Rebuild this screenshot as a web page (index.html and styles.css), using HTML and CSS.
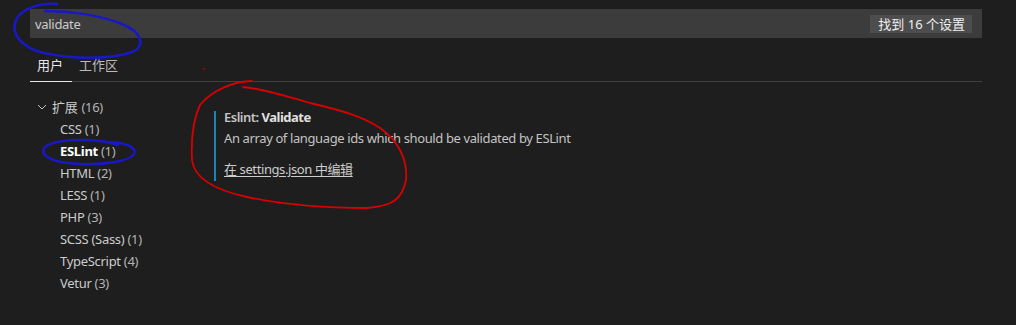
FILE: index.html
```html
<!DOCTYPE html>
<html lang="zh">
<head>
<meta charset="utf-8">
<link rel="stylesheet" href="styles.css">
</head>
<body>
<div class="page">
  <div class="search">
    <span class="query">validate</span>
    <span class="badge">找到 16 个设置</span>
  </div>
  <div class="tabs">
    <span class="tab active">用户</span>
    <span class="tab">工作区</span>
  </div>
  <div class="main">
    <ul class="toc">
      <li class="group"><svg class="chev" width="10" height="10" viewBox="0 0 10 10"><path d="M1 3 L5 7 L9 3" fill="none" stroke="#c5c5c5" stroke-width="1"/></svg>扩展 <span class="count">(16)</span></li>
      <li class="item">CSS <span class="count">(1)</span></li>
      <li class="item sel"><b>ESLint</b> <span class="count">(1)</span></li>
      <li class="item">HTML <span class="count">(2)</span></li>
      <li class="item">LESS <span class="count">(1)</span></li>
      <li class="item">PHP <span class="count">(3)</span></li>
      <li class="item">SCSS (Sass) <span class="count">(1)</span></li>
      <li class="item">TypeScript <span class="count">(4)</span></li>
      <li class="item">Vetur <span class="count">(3)</span></li>
    </ul>
    <div class="setting">
      <div class="title">Eslint: <b>Validate</b></div>
      <div class="desc">An array of language ids which should be validated by ESLint</div>
      <div class="link">在 settings.json 中编辑</div>
    </div>
  </div>
  <svg class="marks" width="1016" height="325" viewBox="0 0 1016 325">
    <path d="M57 4 C40 3 22 8 16 20 C10 34 22 48 44 53 C70 59 110 60 132 52 C146 46 142 32 122 24 C100 15 70 11 45 11" fill="none" stroke="#1818c8" stroke-width="2.5" stroke-linecap="round"/>
    <path d="M118 145 C95 137 55 139 45 147 C38 155 52 163 80 164 C105 165 130 161 134 154 C137 148 128 143 110 142" fill="none" stroke="#1818c8" stroke-width="2.5" stroke-linecap="round"/>
    <path d="M252 81 C235 81 212 90 200 105 C193 120 191 140 192 160 C194 178 215 190 247 197 C280 204 320 208 367 208 C392 206 402 200 406 180 C408 160 398 140 380 128 C362 116 340 110 310 103 C285 96 265 89 243 87" fill="none" stroke="#d80000" stroke-width="1.8" stroke-linecap="round"/>
    <circle cx="204" cy="69" r="1" fill="#b00000"/>
  </svg>
</div>
</body>
</html>
```
FILE: styles.css
```css
* { box-sizing: border-box; }
html, body {
  margin: 0;
  padding: 0;
  background: #1e1e1e;
}
body {
  font-family: "Noto Sans", "Noto Sans CJK SC", sans-serif;
  font-size: 13px;
  letter-spacing: -0.3px;
  color: #cccccc;
}
.page {
  position: relative;
  width: 1016px;
  height: 325px;
  padding: 9px 34px 0 30px;
  overflow: hidden;
}
.search {
  height: 29px;
  background: #3c3c3c;
  display: flex;
  align-items: center;
  justify-content: space-between;
  padding: 0 10px 0 5px;
}
.query {
  color: #cccccc;
  font-size: 13px;
}
.badge {
  background: #4d4d4d;
  color: #f0f0f0;
  height: 18px;
  line-height: 18px;
  padding: 0 7px 0 8px;
  font-size: 13px;
  letter-spacing: 0;
  margin-top: 1px;
}
.tabs {
  margin-top: 14px;
  height: 30px;
  border-bottom: 1px solid #3f3f3f;
  display: flex;
  align-items: flex-end;
}
.tab {
  height: 30px;
  line-height: 29px;
  padding: 0 8px 0 7px;
  color: #bbbbbb;
  font-size: 13px;
  letter-spacing: 0;
}
.tab.active {
  color: #e7e7e7;
  border-bottom: 1px solid #e7e7e7;
  margin-bottom: -1px;
  height: 31px;
  padding: 0 9px 0 7px;
}
.main {
  display: flex;
  margin-top: 14px;
}
.toc {
  list-style: none;
  margin: 0;
  padding: 0;
  width: 184px;
  flex: none;
}
.toc li {
  height: 22px;
  line-height: 22px;
  color: #cccccc;
  white-space: nowrap;
}
.group {
  padding-left: 7px;
  display: flex;
  align-items: center;
}
.chev {
  margin-right: 5px;
}
.group .count { margin-left: 4px; }
.item {
  padding-left: 30px;
}
.count {
  color: #b4b4b4;
}
.sel b {
  color: #ffffff;
  font-weight: 700;
}
.setting {
  margin-top: 15px;
  border-left: 2px solid #1a85b5;
  padding: 0 0 2px 8px;
  align-self: flex-start;
}
.title {
  line-height: 12px;
  color: #c4c4c4;
  font-weight: 600;
  letter-spacing: -0.5px;
}
.title b {
  color: #e0e0e0;
  font-weight: 700;
}
.desc {
  margin-top: 5px;
  line-height: 20px;
  color: #c4c4c4;
  letter-spacing: -0.38px;
}
.link {
  margin-top: 11px;
  line-height: 20px;
  color: #cccccc;
  letter-spacing: -0.4px;
  text-decoration: underline;
  text-underline-offset: 2px;
}
.marks {
  position: absolute;
  left: 0;
  top: 0;
  pointer-events: none;
}
```
